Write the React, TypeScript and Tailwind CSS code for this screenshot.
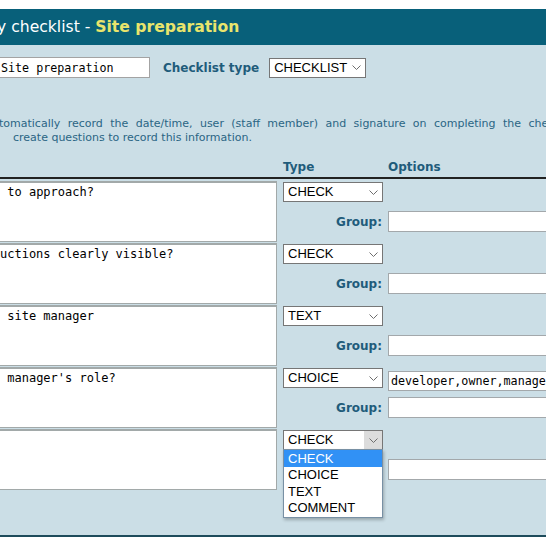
import React from "react";

const Chevron = () => (
  <svg width="9" height="5" viewBox="0 0 9 5" className="shrink-0">
    <path d="M0.5 0.5 L4.5 4.5 L8.5 0.5" fill="none" stroke="#6e6e6e" strokeWidth="1" />
  </svg>
);

function SelectBox({ value, width, open }: { value: string; width: string; open?: boolean }) {
  return (
    <div
      className={`flex items-stretch h-[20px] ${width} border border-[#767676] bg-white text-[13px] leading-[18px] text-black font-['Liberation_Sans',Arial,sans-serif]`}
    >
      <span className="flex-1 pl-[4px] whitespace-nowrap">{value}</span>
      <span className={`flex items-center justify-center w-[18px] ${open ? "bg-[#dcdcdc]" : ""}`}>
        <Chevron />
      </span>
    </div>
  );
}

const rows = [
  { q: " to approach?", type: "CHECK", options: "" },
  { q: "uctions clearly visible?", type: "CHECK", options: "" },
  { q: " site manager", type: "TEXT", options: "" },
  { q: " manager's role?", type: "CHOICE", options: "developer,owner,manager" },
  { q: "", type: "CHECK", options: "", open: true },
];

const mono = "font-['DejaVu_Sans_Mono','Liberation_Mono',monospace]";

export default function App() {
  return (
    <div className="w-[546px] h-[546px] overflow-hidden bg-white font-['DejaVu_Sans',Verdana,sans-serif]">
      <div className="h-[9px]" />
      <div className="h-[36px] bg-[#08607a] flex items-center pt-[1px] whitespace-nowrap text-[15.6px] text-white">
        <span className="-ml-[3px]">y checklist -&nbsp;</span>
        <b className="text-[#e9e46c]">Site preparation</b>
      </div>
      <div className="h-[492px] bg-[#cbdee6] border-b-2 border-[#1d4b5b]">
        <div className="flex items-center pt-[12px] whitespace-nowrap">
          <input
            readOnly
            value="Site preparation"
            className={`-ml-[2px] w-[152px] h-[21px] border border-[#a3a3a3] bg-white pl-[2px] text-[11.7px] text-black outline-none ${mono}`}
          />
          <span className="ml-[13px] text-[12px] font-bold text-[#1f5c7b]">Checklist type</span>
          <div className="ml-[10px]">
            <SelectBox value="CHECKLIST" width="w-[97px]" />
          </div>
        </div>

        <div className="mt-[39px] text-[11px] leading-[14px] text-[#2a6584] whitespace-nowrap">
          <div className="-ml-[1px] [word-spacing:3.9px]">
            tomatically record the date/time, user (staff member) and signature on completing the checklist.
          </div>
          <div className="pl-[13px]">create questions to record this information.</div>
        </div>

        <div className="-ml-[3px] w-[600px] mt-[15px]">
          <div className="grid grid-cols-[280px_100px_1fr] gap-x-[6px] h-[19px] border-b-2 border-[#222222] text-[12px] leading-[14px] font-bold text-[#1f5c7b]">
            <div />
            <div className="pl-0">Type</div>
            <div className="-ml-[1px]">Options</div>
          </div>

          <div className="mt-[2px] flex flex-col">
            {rows.map((r, i) => (
              <div key={i} className="grid grid-cols-[280px_100px_1fr] gap-x-[6px] h-[62px]">
                <textarea
                  readOnly
                  defaultValue={r.q}
                  className={`h-[61px] w-[280px] resize-none overflow-hidden bg-white border border-t-2 border-[#a2a9a9] pl-[2px] pt-[2px] text-[12px] leading-[14px] text-black outline-none ${mono}`}
                />
                <div className="flex flex-col relative">
                  <div className="h-[30px] pt-[1px]">
                    <SelectBox value={r.type} width="w-[100px]" open={r.open} />
                  </div>
                  <div className="h-[21px] flex items-center justify-end pr-[1px] text-[12px] font-bold text-[#1f5c7b]">
                    Group:
                  </div>
                  {r.open && (
                    <div className="absolute left-0 top-[20px] w-[100px] bg-white border border-[#7890a4] shadow-[1px_2px_3px_rgba(0,0,0,0.25)] text-[13px] leading-[16.5px] text-black font-['Liberation_Sans',Arial,sans-serif] z-10">
                      <div className="bg-[#3191f5] text-white pl-[4px] h-[17px] leading-[17px]">CHECK</div>
                      <div className="pl-[4px] h-[16.5px]">CHOICE</div>
                      <div className="pl-[4px] h-[16.5px]">TEXT</div>
                      <div className="pl-[4px] h-[16.5px]">COMMENT</div>
                    </div>
                  )}
                </div>
                <div className="flex flex-col -ml-[1px]">
                  <div className="h-[30px] pt-[1px]">
                    {r.options && (
                      <input
                        readOnly
                        value={r.options}
                        className={`w-[200px] h-[20px] border border-[#a3a8ab] bg-white pl-[2px] text-[11.7px] text-black outline-none ${mono}`}
                      />
                    )}
                  </div>
                  <input
                    readOnly
                    value=""
                    className="w-[200px] h-[21px] border border-[#a3a8ab] bg-white outline-none"
                  />
                </div>
              </div>
            ))}
          </div>
        </div>
      </div>
    </div>
  );
}
